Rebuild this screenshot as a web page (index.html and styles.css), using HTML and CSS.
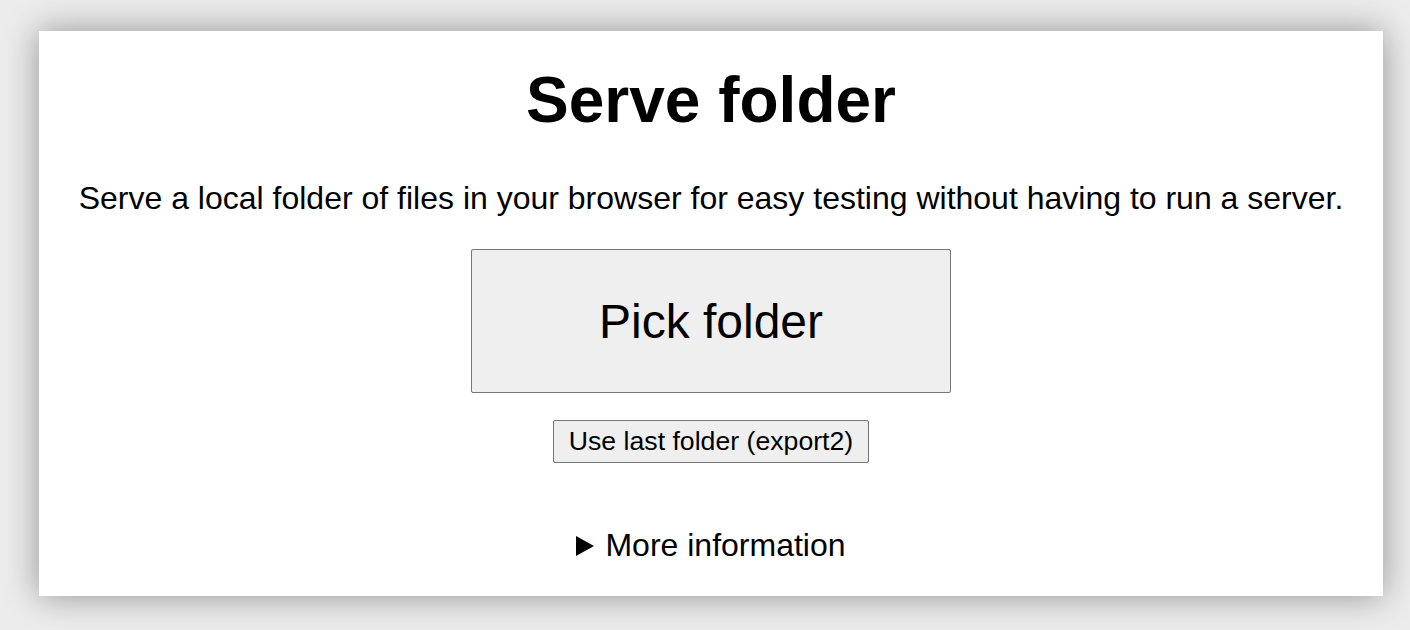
FILE: index.html
```html
<!DOCTYPE html>
<html lang="en">
<head>
<meta charset="utf-8">
<title>Serve folder</title>
<link rel="stylesheet" href="styles.css">
</head>
<body>
<main class="card">
  <h1 class="title">Serve folder</h1>
  <p class="lead">Serve a local folder of files in your browser for easy testing without having to run a server.</p>
  <button class="btn-pick" type="button">Pick folder</button>
  <button class="btn-last" type="button">Use last folder (export2)</button>
  <details class="info">
    <summary class="info-summary">More information</summary>
  </details>
</main>
</body>
</html>
```

FILE: styles.css
```css
html, body {
  margin: 0;
  padding: 0;
}
body {
  background: #ececec;
  font-family: "Liberation Sans", Arial, sans-serif;
  color: #000;
  padding: 31px 27px 34px 39px;
}
.card {
  background: #fff;
  box-shadow: 0 0 32px rgba(0, 0, 0, 0.38);
  height: 565px;
  box-sizing: border-box;
  display: flex;
  flex-direction: column;
  align-items: center;
  padding-top: 32px;
}
.title {
  font-size: 64px;
  font-weight: bold;
  margin: 0;
  line-height: 74px;
}
.lead {
  font-size: 32px;
  line-height: 36px;
  margin: 43px 0 0;
}
.btn-pick {
  margin-top: 33px;
  width: 480px;
  height: 144px;
  font-family: "Liberation Sans", Arial, sans-serif;
  font-size: 48px;
  background: #efefef;
  border: 1px solid #767676;
  border-radius: 2px;
  color: #000;
  padding: 0;
}
.btn-last {
  margin-top: 27px;
  height: 43px;
  font-family: "Liberation Sans", Arial, sans-serif;
  font-size: 26.67px;
  background: #efefef;
  border: 1px solid #767676;
  border-radius: 2px;
  color: #000;
  padding: 0 15px;
}
.info {
  margin-top: 64px;
  font-size: 32px;
}
.info-summary {
  cursor: pointer;
  line-height: 37px;
  list-style: none;
  display: flex;
  align-items: center;
}
.info-summary::-webkit-details-marker {
  display: none;
}
.info-summary::before {
  content: "";
  width: 0;
  height: 0;
  border-top: 10px solid transparent;
  border-bottom: 10px solid transparent;
  border-left: 18px solid #000;
  margin-right: 11px;
  margin-top: 1px;
}
```
